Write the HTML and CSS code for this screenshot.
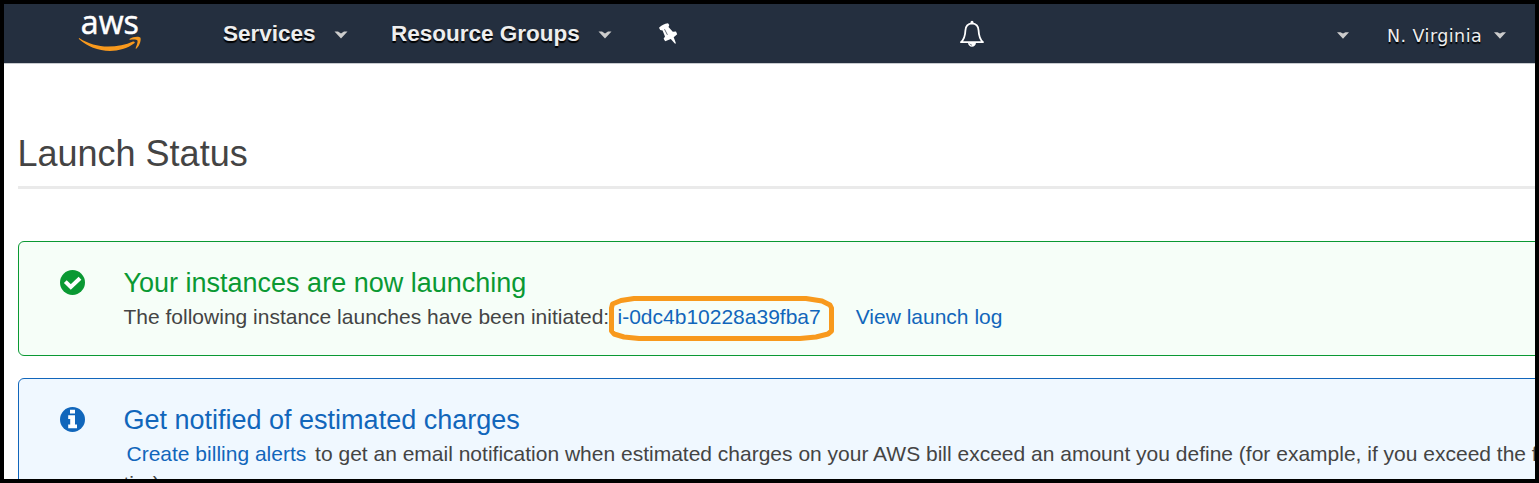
FILE: index.html
```html
<!DOCTYPE html>
<html lang="en">
<head>
<meta charset="utf-8">
<title>Launch Status</title>
<link rel="stylesheet" href="styles.css">
</head>
<body>
<div class="frame">
  <header class="nav">
    <svg class="logo" width="64" height="43" viewBox="0 0 64 43">
      <text class="logo-text" x="2.800" y="21.700" textLength="58" lengthAdjust="spacingAndGlyphs">aws</text>
      <path fill="#f8991d" d="M1.500 26.200C10 31.500 20 34.500 30 34.500C39 34.500 48 32.700 55 29.500C56.500 29 57.500 30.300 56.300 31.300C49.500 36.500 40.500 38.900 32 38.900C20 38.900 9 34.200 1.200 27.300C.5 26.700 .8 25.800 1.500 26.200Z"/>
      <path fill="#f8991d" d="M51.800 26.700C54.300 24.600 60.900 24 62.300 25.400C63.500 27.200 61.800 33.700 58.500 36.400C57.900 36.900 57.400 36.600 57.700 35.900C58.600 33.700 60.100 29.700 59.400 28.500C58.600 27.200 54.600 27.400 52.400 27.800C51.500 27.900 51.200 27.200 51.800 26.700Z"/>
    </svg>
    <a class="nav-item services">Services</a>
    <svg class="caret" width="14" height="8" viewBox="0 0 14 8"><path d="M.5 .5H4L7 2.500L10 .5H13.500L7 7.500Z"/></svg>
    <a class="nav-item groups">Resource Groups</a>
    <svg class="caret" width="14" height="8" viewBox="0 0 14 8"><path d="M.5 .5H4L7 2.500L10 .5H13.500L7 7.500Z"/></svg>
    <svg class="pin" width="20" height="22" viewBox="0 0 20 22">
      <path fill="#fff" d="M0 4.800C2.500 2.300 5.500 .5 9 .3L10.300 2L9.500 4L13.800 8.800L17 8.400L18.200 11.200L14.700 14.200L17 20.500L15.800 20.600L11.800 16L6.200 18.200L4.600 15.800L6 13.600L3.600 7.400L1.200 7Z"/>
      <path fill="none" stroke="#242f3f" stroke-width=".7" d="M5.500 6.200L8.400 11.800"/>
    </svg>
    <svg class="bell" width="26" height="28" viewBox="0 0 26 28">
      <path fill="none" stroke="#fff" stroke-width="1.800" stroke-linejoin="round" d="M2 22.200C5.500 19 6.200 16 6.400 10.500C6.600 6 9 3.500 13 3.300C17 3.500 19.400 6 19.600 10.500C19.800 16 20.500 19 24 22.200Z"/>
      <path fill="#fff" d="M11.500 3.500V2.300A1.500 1.500 0 0 1 14.500 2.300V3.500ZM9 22.500H17A4 4.300 0 0 1 9 22.500Z"/>
      <path fill="none" stroke="#242f3f" stroke-width=".6" d="M10.800 23.700Q11.500 25 13 25.200"/>
    </svg>
    <svg class="caret small account" width="12" height="7" viewBox="0 0 12 7"><path d="M0 .3H3.500L6 1.500L8.500 .3H12L6 6.700Z"/></svg>
    <a class="region">N. Virginia</a>
    <svg class="caret small" width="12" height="7" viewBox="0 0 12 7"><path d="M0 .3H3.500L6 1.500L8.500 .3H12L6 6.700Z"/></svg>
  </header>
  <main class="content">
    <h1 class="title">Launch Status</h1>
    <section class="alert success">
      <svg class="alert-icon" width="25" height="25" viewBox="0 0 25 25">
        <circle cx="12.500" cy="12.500" r="12.500" fill="#0a9933"/>
        <path fill="none" stroke="#fff" stroke-width="4" d="M5.300 11.600L10.800 17L20 8.200"/>
      </svg>
      <div class="alert-body">
        <h2 class="alert-title">Your instances are now launching</h2>
        <p class="alert-text">The following instance launches have been initiated: <a class="link instance">i-0dc4b10228a39fba7<svg class="marker" width="228" height="48" viewBox="0 0 228 48"><path fill="none" stroke="#f8991d" stroke-width="5" stroke-linejoin="round" d="M27 4.500H199L215 7L223 11L224.500 14V37L221 40L209 43L193 44.500H32L17 43L7 40L4.500 37V14L5.500 10L14 6.500Z"/></svg></a><a class="link log">View launch log</a></p>
      </div>
    </section>
    <section class="alert info">
      <svg class="alert-icon" width="25" height="25" viewBox="0 0 25 25">
        <circle cx="12.500" cy="12.500" r="12.500" fill="#1166bb"/>
        <path fill="#fff" d="M10 2.800H15V6.500H10ZM8.200 8.200H15V17.500H17V21.300H8.200V17.500H10.200V12H8.200Z"/>
      </svg>
      <div class="alert-body">
        <h2 class="alert-title">Get notified of estimated charges</h2>
        <p class="alert-text"><a class="link billing">Create billing alerts</a> to get an email notification when estimated charges on your AWS bill exceed an amount you define (for example, if you exceed the free usage<br>tier).</p>
      </div>
    </section>
  </main>
</div>
</body>
</html>
```

FILE: styles.css
```css
* { box-sizing: border-box; }
body { margin: 0; font-family: "Liberation Sans", Arial, sans-serif; color: #444; }
.frame {
  width: 1539px;
  height: 483px;
  border: 4px solid #000;
  background: #fff;
  overflow: hidden;
}
.nav {
  display: flex;
  align-items: center;
  height: 60px;
  padding-left: 74px;
  background: #242f3f;
  border-bottom: 1px solid #c8cbcf;
}
.logo { flex: none; margin-right: 81px; overflow: visible; }
.logo-text { font-family: "Open Sans", "Noto Sans", sans-serif; font-size: 32px; font-weight: 500; fill: #fff; stroke: #fff; stroke-width: .5px; }
.nav-item {
  font-size: 22.5px;
  font-weight: bold;
  line-height: 26px;
  color: #eee;
  text-shadow: 0 2px 1px #000;
  white-space: nowrap;
}
.services { width: 111px; }
.groups { width: 207px; margin-left: 43px; }
.caret { flex: none; margin-top: 3px; fill: #ccc; }
.pin { flex: none; margin-left: 47px; }
.bell { flex: none; margin-left: 280px; margin-top: 1px; }
.account { margin-left: 352px; }
.region {
  width: 107px;
  margin-left: 38px;
  padding-top: 4px;
  font-family: "DejaVu Sans", sans-serif;
  font-size: 17.5px;
  letter-spacing: .45px;
  color: #eee;
  text-shadow: 0 2px 1px #000;
  white-space: nowrap;
}
.content { width: 1700px; padding: 69px 0 0 14px; }
.title {
  height: 56px;
  margin: 0 0 52px;
  border-bottom: 3px solid #eaeaea;
  font-size: 36px;
  font-weight: normal;
  line-height: 42px;
  text-indent: -.5px;
}
.alert {
  display: flex;
  margin-bottom: 22px;
  padding: 24px 0 0 41px;
  border: 1px solid;
  border-radius: 6px;
}
.success { height: 115px; border-color: #0a9933; background: #f6fef8; color: #0a9933; }
.info { height: 160px; border-color: #1166bb; background: #f0f8ff; color: #1166bb; }
.alert-icon { flex: none; margin: 4px 38.5px 0 0; }
.alert-title { margin: 0; font-size: 27px; font-weight: normal; line-height: 34px; }
.alert-text { margin: 0; padding-top: 2px; font-size: 21px; line-height: 30px; color: #444; white-space: nowrap; }
.link { color: #1166bb; }
.instance { position: relative; margin-left: 2.5px; }
.marker { position: absolute; left: -10.5px; top: -11px; }
.log { margin-left: 35px; }
.billing { margin: 0 3px; }
```
